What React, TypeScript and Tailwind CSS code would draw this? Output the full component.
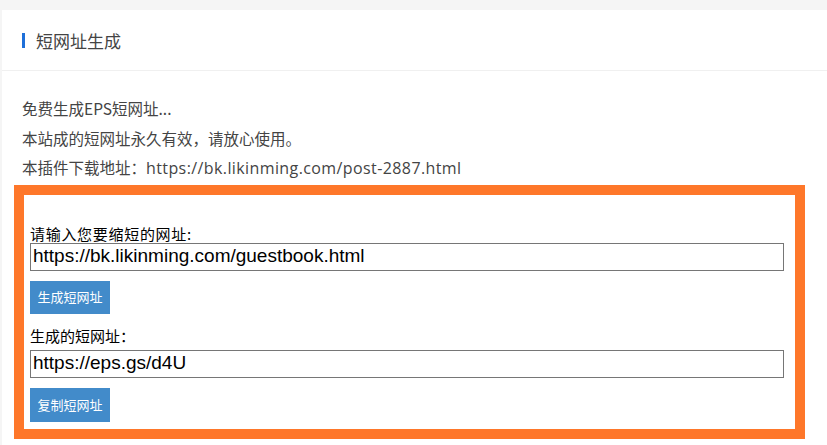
export default function App() {
  return (
    <div className="min-h-[445px] bg-[#f5f5f5] pt-[10px] pl-[2px]">
      <div className="bg-white h-[435px]" style={{ fontFamily: '"Noto Sans CJK SC", "Noto Sans", sans-serif' }}>
        {/* header */}
        <div className="h-[61px] border-b border-[#f0f0f0] flex items-center pl-[20px]">
          <span className="w-[3px] h-[15px] bg-[#1e6fd9]" />
          <span className="ml-[11px] text-[17px] text-[#444] leading-none">短网址生成</span>
        </div>

        <div className="pl-[20px] pt-[23px] text-[15.5px] text-[#444]">
          <p className="h-[29.5px] flex items-center">免费生成EPS短网址...</p>
          <p className="h-[29.5px] flex items-center">本站成的短网址永久有效，请放心使用。</p>
          <p className="h-[29.5px] flex items-center">
            本插件下载地址：
            <span className="text-[16px] tracking-[0.4px]" style={{ fontFamily: '"Open Sans", sans-serif' }}>
              https://bk.likinming.com/post-2887.html
            </span>
          </p>
        </div>

        <div className="ml-[12px] mt-[2px] w-[791px] h-[254px] border-[10px] border-[#fe772a] pl-[6px] pt-[30px] text-black">
          <div className="text-[15px] leading-[18px] tracking-[0.7px]">请输入您要缩短的网址:</div>
          <div className="w-[754px] h-[28px] border border-[#767676] flex items-center px-[2px] text-[19px]" style={{ fontFamily: '"Liberation Sans", Arial, sans-serif' }}>
            https://bk.likinming.com/guestbook.html
          </div>
          <button className="block mt-[10px] w-[80px] h-[33px] bg-[#428bca] text-white text-[13px]">生成短网址</button>

          <div className="mt-[13px] text-[15px] leading-[18px]">生成的短网址：</div>
          <div className="mt-[5px] w-[754px] h-[28px] border border-[#767676] flex items-center px-[2px] text-[19px]" style={{ fontFamily: '"Liberation Sans", Arial, sans-serif' }}>
            https://eps.gs/d4U
          </div>
          <button className="block mt-[10px] w-[80px] h-[34px] bg-[#428bca] text-white text-[13px]">复制短网址</button>
        </div>
      </div>
    </div>
  );
}
